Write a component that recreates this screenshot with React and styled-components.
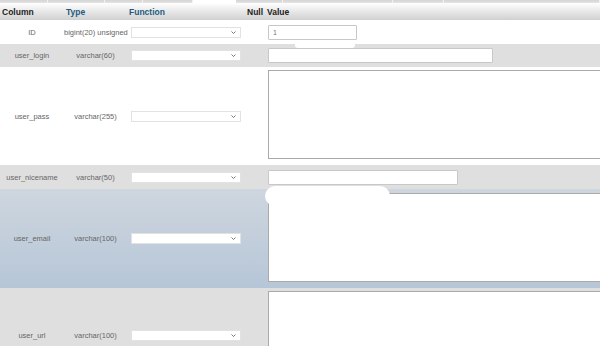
import React from 'react';
import styled, { createGlobalStyle } from 'styled-components';

const GlobalStyle = createGlobalStyle`
  html, body {
    margin: 0;
    padding: 0;
    background: #fff;
    overflow: hidden;
    font-family: "Liberation Sans", Arial, sans-serif;
  }
`;

const Page = styled.div`
  width: 600px;
  height: 346px;
  overflow: hidden;
`;

const TabStrip = styled.div`
  display: flex;
  height: 3px;
`;

const Tab = styled.div`
  width: ${p => p.w}px;
  flex: ${p => (p.grow ? 1 : 'none')};
  background: ${p => (p.active ? '#fff' : 'linear-gradient(#d4d4d4, #e4e4e4)')};
  border-right: 1px solid ${p => (p.active ? '#fff' : '#f2f2f2')};
`;

const Table = styled.table`
  width: 600px;
  border-collapse: collapse;
  table-layout: fixed;
`;

const Th = styled.th`
  text-align: left;
  font-size: 8.5px;
  font-weight: bold;
  color: ${p => (p.link ? '#235a81' : '#222')};
  padding: 0 0 0 2px;
  height: 17px;
  white-space: nowrap;
  background: linear-gradient(#fff, #d0d0d0);
`;

const Row = styled.tr`
  background: ${p =>
    p.hover
      ? 'linear-gradient(#ced6df, #b6c6d7)'
      : p.even
      ? '#dfdfdf'
      : '#fff'};
`;

const Td = styled.td`
  font-size: 7.5px;
  color: #666;
  white-space: nowrap;
  overflow: visible;
  vertical-align: ${p => (p.offset ? 'top' : 'middle')};
  text-align: ${p => (p.center ? 'center' : 'left')};
  padding: ${p => (p.offset ? `${p.offset}px 0 0` : '0')};
`;

const ValueCell = styled.td`
  position: relative;
  padding: ${p => p.pad || '3px 0 5px 3px'};
  vertical-align: top;
`;

const SelectWrap = styled.div`
  position: relative;
  width: 110px;
  height: 11px;
  margin-left: 4px;
`;

const Select = styled.select`
  appearance: none;
  width: 110px;
  height: 11px;
  box-sizing: border-box;
  border: 1px solid #e2e2e2;
  background: #fff;
  padding: 0;
  display: block;
`;

const Chevron = styled.svg`
  position: absolute;
  right: 5px;
  top: 4px;
  width: 5px;
  height: 3px;
  pointer-events: none;
`;

const Input = styled.input`
  display: block;
  box-sizing: border-box;
  width: ${p => p.w}px;
  height: 15px;
  border: 1px solid #c8c8c8;
  border-radius: 1px;
  background: #fff;
  font-family: "Liberation Sans", Arial, sans-serif;
  font-size: 7px;
  color: #777;
  padding: 0 4px;
  margin: 1px 0;
`;

const Area = styled.textarea`
  display: block;
  box-sizing: border-box;
  width: 345px;
  height: ${p => p.h}px;
  border: 1px solid #aaa;
  border-right: none;
  background: #fff;
  resize: none;
  padding: 0;
  margin: 0;
`;

const Blob = styled.div`
  position: absolute;
  left: ${p => p.x}px;
  top: ${p => p.y}px;
  width: ${p => p.w}px;
  height: ${p => p.h}px;
  background: #fff;
  border-radius: ${p => p.h / 2}px;
`;

const FunctionSelect = () => (
  <SelectWrap>
    <Select defaultValue="" />
    <Chevron viewBox="0 0 5 3">
      <path d="M0.5 0.5 L2.5 2.5 L4.5 0.5" fill="none" stroke="#666" strokeWidth="0.9" />
    </Chevron>
  </SelectWrap>
);

const tabs = [47, 56, 37, 49, 42, 46, 109, 50, 0];

export default function App() {
  return (
    <Page>
      <GlobalStyle />
      <TabStrip>
        {tabs.map((w, i) => (
          <Tab key={i} w={w} active={i === 4} grow={w === 0} />
        ))}
      </TabStrip>
      <Table>
        <colgroup>
          <col style={{ width: 64 }} />
          <col style={{ width: 63 }} />
          <col style={{ width: 118 }} />
          <col style={{ width: 20 }} />
          <col />
        </colgroup>
        <thead>
          <tr>
            <Th>Column</Th>
            <Th link>Type</Th>
            <Th link>Function</Th>
            <Th>Null</Th>
            <Th>Value</Th>
          </tr>
        </thead>
        <tbody>
          <Row>
            <Td center>ID</Td>
            <Td center>bigint(20) unsigned</Td>
            <Td><FunctionSelect /></Td>
            <Td />
            <ValueCell pad="4px 0 3px 3px">
              <Input w={89} defaultValue="1" />
            </ValueCell>
          </Row>
          <Row even>
            <Td center>user_login</Td>
            <Td center>varchar(60)</Td>
            <Td><FunctionSelect /></Td>
            <Td />
            <ValueCell pad="3px 0 3px 3px">
              <Input w={225} />
              <Blob x={30} y={-2} w={60} h={6} />
            </ValueCell>
          </Row>
          <Row>
            <Td center>user_pass</Td>
            <Td center>varchar(255)</Td>
            <Td><FunctionSelect /></Td>
            <Td />
            <ValueCell pad="3px 0 6px 3px">
              <Area h={89} />
            </ValueCell>
          </Row>
          <Row even>
            <Td center>user_nicename</Td>
            <Td center>varchar(50)</Td>
            <Td><FunctionSelect /></Td>
            <Td />
            <ValueCell pad="4px 0 3px 3px">
              <Input w={190} />
            </ValueCell>
          </Row>
          <Row hover>
            <Td center>user_email</Td>
            <Td center>varchar(100)</Td>
            <Td><FunctionSelect /></Td>
            <Td />
            <ValueCell pad="4px 0 6px 3px">
              <Area h={89} />
              <Blob x={0} y={-3} w={125} h={20} />
            </ValueCell>
          </Row>
          <Row even>
            <Td center offset={43}>user_url</Td>
            <Td center offset={43}>varchar(100)</Td>
            <Td offset={42}><FunctionSelect /></Td>
            <Td />
            <ValueCell pad="3px 0 6px 3px">
              <Area h={89} />
            </ValueCell>
          </Row>
        </tbody>
      </Table>
    </Page>
  );
}
